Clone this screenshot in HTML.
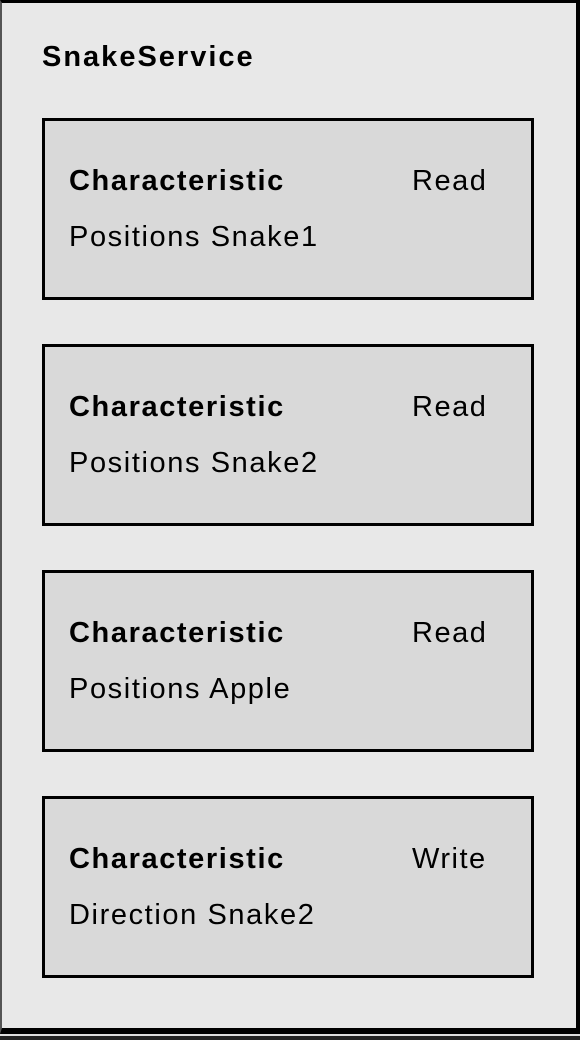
<!DOCTYPE html>
<html><head><style>
html,body{margin:0;padding:0;width:580px;height:1040px;overflow:hidden;background:#222;font-family:"Liberation Sans",Arial,sans-serif;}
.outer{position:absolute;left:0;top:0;width:574px;height:1025px;background:#e8e8e8;border-top:3px solid #000;border-left:2px solid #555;border-right:4px solid #000;border-bottom:6px solid #000;}
.line{position:absolute;left:0;top:1034px;width:580px;height:2px;background:#ddd;}
.title{position:absolute;left:42px;top:41px;font-size:29px;font-weight:bold;color:#000;letter-spacing:2px;}
.card{position:absolute;left:42px;width:486px;height:176px;background:#d9d9d9;border:3px solid #000;box-sizing:content-box;}
.card .h{position:absolute;left:24px;top:44px;font-size:29px;font-weight:bold;letter-spacing:1.6px;}
.card .r{position:absolute;left:367px;top:44px;font-size:29px;letter-spacing:1.5px;}
.card .n{position:absolute;left:24px;top:100px;font-size:29px;letter-spacing:1.6px;}
</style></head><body>
<div class="outer"></div>
<div class="line"></div>
<div class="title">SnakeService</div>
<div class="card" style="top:118px"><div class="h">Characteristic</div><div class="r">Read</div><div class="n">Positions Snake1</div></div>
<div class="card" style="top:344px"><div class="h">Characteristic</div><div class="r">Read</div><div class="n">Positions Snake2</div></div>
<div class="card" style="top:570px"><div class="h">Characteristic</div><div class="r">Read</div><div class="n">Positions Apple</div></div>
<div class="card" style="top:796px"><div class="h">Characteristic</div><div class="r">Write</div><div class="n">Direction Snake2</div></div>
</body></html>
